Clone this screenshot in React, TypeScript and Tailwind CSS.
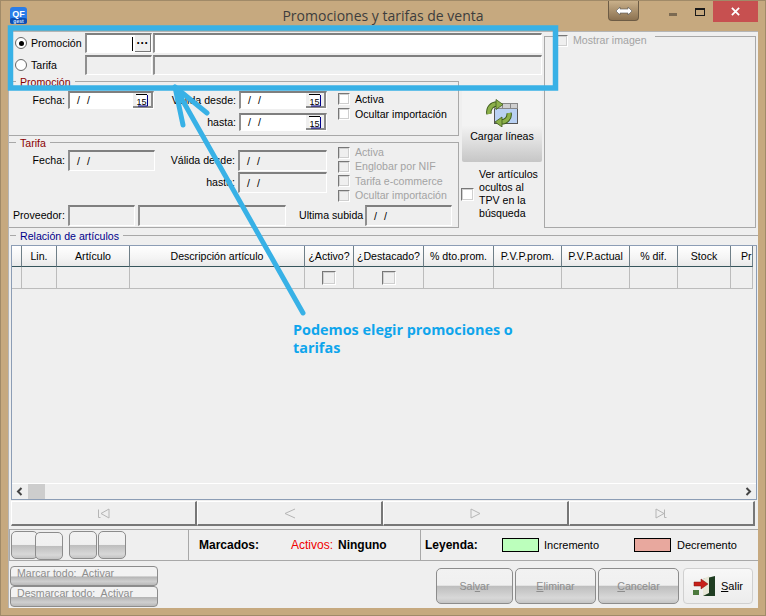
import React from "react";

const font = "font-['Liberation_Sans',Arial,sans-serif]";

function Sunken({ className = "", white = false, children }: { className?: string; white?: boolean; children?: React.ReactNode }) {
  return (
    <div className={`flex items-center border-t-2 border-l-2 border-t-[#7f7f7f] border-l-[#8f8f8f] border-b border-r border-b-white border-r-white ${white ? "bg-white" : "bg-[#efefef]"} ${className}`}>
      {children}
    </div>
  );
}

function CalendarIcon() {
  return (
    <div className="flex h-full w-[20px] items-center justify-center border-b-2 border-r-2 border-b-[#8a8a8a] border-r-[#8a8a8a] bg-[#efefef]">
      <svg width="14" height="14" viewBox="0 0 14 14">
        <rect x="1.5" y="1.5" width="10" height="11" fill="#fff" />
        <path d="M1 1.5h11" stroke="#000" />
        <path d="M12.5 2v11H3" stroke="#00008a" fill="none" />
        <text x="6.5" y="11.5" textAnchor="middle" fontSize="9" fill="#000" fontFamily="Liberation Sans">15</text>
      </svg>
    </div>
  );
}

function DateField({ w, button = false, white = false, h = "h-[18px]" }: { w: string; button?: boolean; white?: boolean; h?: string }) {
  return (
    <Sunken white={white} className={`${w} ${h} justify-between`}>
      <span className="ml-[7px] tracking-[2px] text-black">/ /</span>
      {button && <CalendarIcon />}
    </Sunken>
  );
}

function Check({ disabled = false, className = "" }: { disabled?: boolean; className?: string }) {
  return (
    <div className={`h-[12px] w-[12px] shrink-0 border-t border-l border-t-[#777] border-l-[#777] border-b border-r border-b-white border-r-white shadow-[inset_0_0_0_1px_#cfcfcf] ${disabled ? "bg-[#efefef]" : "bg-white"} ${className}`} />
  );
}

function CheckRow({ label, disabled = false, h }: { label: string; disabled?: boolean; h: string }) {
  return (
    <div className={`flex items-center gap-[5px] whitespace-nowrap ${h}`}>
      <Check disabled={disabled} />
      <span className={disabled ? "text-[#a3a3a3]" : "text-black"}>{label}</span>
    </div>
  );
}

function GroupLabel({ text, color }: { text: string; color: string }) {
  return <span className={`absolute left-[7px] top-[-6px] bg-[#efefef] px-[4px] ${color}`}>{text}</span>;
}

function Radio({ checked = false }: { checked?: boolean }) {
  return (
    <div className="flex h-[12px] w-[12px] items-center justify-center rounded-full border border-[#666] bg-white">
      {checked && <div className="h-[5px] w-[5px] rounded-full bg-black" />}
    </div>
  );
}

function GlossButton({ className = "", children }: { className?: string; children?: React.ReactNode }) {
  return (
    <div className={`rounded-[5px] border border-[#8c8c8c] bg-[linear-gradient(#f2f2f2_0%,#f0f0f0_48%,#bdbdbd_50%,#d8d8d8_85%,#c4c4c4_100%)] ${className}`}>
      {children}
    </div>
  );
}

function NavButton({ path }: { path: string }) {
  return (
    <div className="flex h-[25px] flex-1 items-center justify-center border-t border-l border-t-white border-l-white border-r-2 border-b-2 border-r-[#777] border-b-[#777]">
      <svg width="13" height="11" viewBox="0 0 13 11" fill="none" stroke="#b5b5b5">
        <path d={path} />
      </svg>
    </div>
  );
}

const columns = [
  { label: "", w: "w-[10px]" },
  { label: "Lin.", w: "w-[35px]" },
  { label: "Artículo", w: "w-[73px]" },
  { label: "Descripción artículo", w: "w-[175px]" },
  { label: "¿Activo?", w: "w-[49px]", check: true },
  { label: "¿Destacado?", w: "w-[70px]", check: true },
  { label: "% dto.prom.", w: "w-[70px]" },
  { label: "P.V.P.prom.", w: "w-[68px]" },
  { label: "P.V.P.actual", w: "w-[68px]" },
  { label: "% dif.", w: "w-[48px]" },
  { label: "Stock", w: "w-[53px]" },
  { label: "Pr", w: "w-[22px] !justify-start pl-[10px]" },
];

export default function App() {
  return (
    <div className={`relative flex h-[616px] w-[766px] flex-col overflow-hidden border border-[#a08a68] bg-[#c6a97f] text-[10.6px] leading-[13px] ${font}`}>
      <div className="relative flex h-[30px] shrink-0 items-center justify-center">
        <svg className="absolute left-[9px] top-[6px]" width="17" height="17" viewBox="0 0 17 17">
          <rect width="17" height="17" rx="3" fill="#2a7de8" />
          <rect y="11" width="17" height="6" rx="2" fill="#0d4fb4" />
          <text x="8.5" y="10" textAnchor="middle" fontSize="9" fontWeight="700" fill="#fff" fontFamily="Liberation Sans">QF</text>
          <text x="8.5" y="15.5" textAnchor="middle" fontSize="5" fontWeight="700" fill="#cfe2ff" fontFamily="Liberation Sans">gest</text>
        </svg>
        <span className="text-[14px] leading-[20px] text-[#3d3d3d] font-['Open_Sans',sans-serif]">Promociones y tarifas de venta</span>
        <div className="absolute left-[607px] top-0 flex h-[20px] w-[31px] items-center justify-center rounded-b-[4px] border border-t-0 border-[#6d5c45] bg-[linear-gradient(#c9b08a,#8c7251)]">
          <svg width="18" height="10" viewBox="0 0 18 10" fill="#fff" stroke="#555" strokeWidth="0.6">
            <path d="M1 5l4-4v2h8V1l4 4-4 4V7H5v2z" />
          </svg>
        </div>
        <div className="absolute left-[668px] top-[12px] h-[3px] w-[8px] bg-[#7b6a52]" />
        <div className="absolute left-[694px] top-[7px] h-[8px] w-[10px] border border-t-2 border-[#1a1a1a]" />
        <div className="absolute left-[712px] top-0 flex h-[21px] w-[45px] items-center justify-center bg-[#c75050] text-white">
          <svg width="9" height="9" viewBox="0 0 10 10" stroke="#fff" strokeWidth="2">
            <path d="M1 1l8 8M9 1l-8 8" />
          </svg>
        </div>
      </div>

      <div className="mx-[7px] flex h-[577px] w-[750px] shrink-0 flex-col border-t border-l border-t-[#b5b5b5] border-l-[#b5b5b5] bg-[#efefef]">
        <div className="flex h-[196px] shrink-0">
          <div className="w-[535px] shrink-0">
            <div className="flex h-[46px] flex-col gap-[2px] pt-[1px]">
              <div className="flex h-[20px] items-center">
                <div className="ml-[6px] w-[16px]"><Radio checked /></div>
                <span className="w-[54px] text-black">Promoción</span>
                <Sunken white className="h-[20px] w-[67px] justify-end">
                  <div className="mr-[2px] h-[14px] w-[1px] bg-black" />
                  <div className="flex h-full w-[16px] items-center justify-center border-r border-b border-r-[#777] border-b-[#777] bg-[#efefef] text-[12px] font-bold leading-none">···</div>
                </Sunken>
                <Sunken white className="ml-[1px] h-[20px] w-[389px]" />
              </div>
              <div className="flex h-[20px] items-center">
                <div className="ml-[6px] w-[16px]"><Radio /></div>
                <span className="w-[54px] text-black">Tarifa</span>
                <Sunken className="h-[20px] w-[67px]" />
                <Sunken className="ml-[1px] h-[20px] w-[389px]" />
              </div>
            </div>

            <div className="flex">
              <div className="flex w-[450px] shrink-0 flex-col">
                <div className="relative mt-[3px] flex h-[55px] border-t border-b border-r border-t-[#a8a8a8] border-b-[#a8a8a8] border-r-[#a8a8a8]">
                  <GroupLabel text="Promoción" color="text-[#8a0000]" />
                  <div className="mt-[9px] flex w-[145px] justify-end">
                    <div className="flex h-[18px] items-center gap-[3px]">
                      <span>Fecha:</span>
                      <DateField w="w-[86px]" button white />
                    </div>
                  </div>
                  <div className="mt-[9px] flex w-[173px] flex-col items-end gap-[4px]">
                    <div className="flex h-[18px] items-center gap-[3px]"><span>Válida desde:</span><DateField w="w-[88px]" button white /></div>
                    <div className="flex h-[18px] items-center gap-[3px]"><span>hasta:</span><DateField w="w-[88px]" button white /></div>
                  </div>
                  <div className="ml-[11px] mt-[11px] flex flex-col gap-[3px]">
                    <CheckRow label="Activa" h="h-[12px]" />
                    <CheckRow label="Ocultar importación" h="h-[12px]" />
                  </div>
                </div>

                <div className="relative mt-[6px] h-[86px] border border-l-0 border-[#a8a8a8]">
                  <GroupLabel text="Tarifa" color="text-[#8a0000]" />
                  <div className="flex">
                    <div className="mt-[7px] flex w-[146px] justify-end">
                      <div className="flex h-[21px] items-center gap-[3px]"><span>Fecha:</span><DateField w="w-[87px]" h="h-[21px]" /></div>
                    </div>
                    <div className="mt-[7px] flex w-[172px] flex-col items-end gap-[1px]">
                      <div className="flex h-[21px] items-center gap-[3px]"><span>Válida desde:</span><DateField w="w-[89px]" h="h-[21px]" /></div>
                      <div className="flex h-[21px] items-center gap-[3px]"><span>hasta:</span><DateField w="w-[89px]" h="h-[21px]" /></div>
                    </div>
                    <div className="ml-[11px] mt-[3px] flex flex-col">
                      <CheckRow label="Activa" disabled h="h-[13px]" />
                      <CheckRow label="Englobar por NIF" disabled h="h-[15px]" />
                      <CheckRow label="Tarifa e-commerce" disabled h="h-[14px]" />
                      <CheckRow label="Ocultar importación" disabled h="h-[15px]" />
                    </div>
                  </div>
                  <div className="mt-[2px] flex h-[21px] items-center whitespace-nowrap">
                    <span className="ml-[4px] w-[55px]">Proveedor:</span>
                    <Sunken className="h-[21px] w-[67px]" />
                    <Sunken className="ml-[3px] h-[21px] w-[148px]" />
                    <span className="ml-[13px] w-[66px]">Ultima subida</span>
                    <DateField w="w-[87px]" h="h-[21px]" />
                  </div>
                </div>
              </div>

              <div className="ml-[3px] flex flex-1 flex-col">
                <div className="mt-[11px] flex h-[73px] w-[80px] flex-col items-center rounded-[2px] bg-[linear-gradient(#f3f3f3_0%,#f3f3f3_50%,#c6c6c6_100%)] pt-[10px]">
                  <svg width="34" height="28" viewBox="0 0 34 28" fill="none">
                    <rect x="9.5" y="4.5" width="23" height="20" fill="#b9d1f3" stroke="#555" />
                    <rect x="9.5" y="4.5" width="23" height="5" fill="#cfcfcf" stroke="#888" />
                    <path d="M17.5 4v5M25.5 4v5" stroke="#888" />
                    <path d="M4 15C3 9 7 5 12 5" stroke="#3f5d1c" strokeWidth="5.5" />
                    <path d="M4 15C3 9 7 5 12 5" stroke="#8cb04a" strokeWidth="3.5" />
                    <path d="M11 0.5l7 5-7 5z" fill="#8cb04a" stroke="#3f5d1c" strokeWidth="0.8" />
                    <path d="M24 14C25 19 21 23 16 23" stroke="#3f5d1c" strokeWidth="5.5" />
                    <path d="M24 14C25 19 21 23 16 23" stroke="#8cb04a" strokeWidth="3.5" />
                    <path d="M17 18l-7 5 7 5z" fill="#8cb04a" stroke="#3f5d1c" strokeWidth="0.8" />
                  </svg>
                  <span className="mt-[3px] text-black">Cargar líneas</span>
                </div>
                <div className="mt-[6px] flex items-center">
                  <Check className="ml-[-1px] h-[13px] w-[13px]" />
                  <span className="ml-[5px] whitespace-nowrap">Ver artículos<br />ocultos al<br />TPV en la<br />búsqueda</span>
                </div>
              </div>
            </div>
          </div>

          <div className="relative mt-[4px] h-[192px] w-[212px] border border-[#a8a8a8]">
            <div className="absolute left-[11px] top-[-3px] flex items-center gap-[5px] bg-[#efefef] pr-[8px] text-[#a3a3a3]">
              <Check disabled />
              <span>Mostrar imagen</span>
            </div>
          </div>
        </div>

        <div className="relative mt-[7px] ml-[1px] flex h-[265px] w-[748px] shrink-0 flex-col border-t border-t-[#a8a8a8] px-[1px] pt-[9px]">
          <GroupLabel text="Relación de artículos" color="ml-[-1px] text-[#00008a]" />
          <div className="flex h-[255px] flex-col border border-[#8c9db5]">
            <div className="flex h-[21px] shrink-0 overflow-hidden">
              {columns.map((c, i) => (
                <div key={i} className={`flex shrink-0 items-center justify-center whitespace-nowrap border-r border-b border-r-[#6f7f88] border-b-[#36555c] bg-[linear-gradient(#ffffff,#f4f4f4_60%,#e8e8e8)] text-black ${c.w}`}>
                  {c.label}
                </div>
              ))}
            </div>
            <div className="flex h-[22px] shrink-0 overflow-hidden">
              {columns.map((c, i) => (
                <div key={i} className={`flex shrink-0 items-center justify-center border-r border-b border-r-[#bcbcbc] border-b-[#bcbcbc] ${i === 0 ? "border-r-[#36555c] border-b-[#36555c]" : ""} ${c.w}`}>
                  {c.check && <Check disabled className="h-[14px] w-[14px]" />}
                </div>
              ))}
            </div>
            <div className="flex-1" />
            <div className="flex h-[16px] shrink-0 items-center justify-between border-t border-t-white px-[4px]">
              <div className="flex items-center gap-[5px]">
                <svg width="7" height="9" viewBox="0 0 7 9" fill="none" stroke="#444" strokeWidth="2"><path d="M5.5 1L2 4.5 5.5 8" /></svg>
                <div className="h-[15px] w-[17px] bg-[#cdcdcd]" />
              </div>
              <svg width="7" height="9" viewBox="0 0 7 9" fill="none" stroke="#444" strokeWidth="2"><path d="M1.5 1L5 4.5 1.5 8" /></svg>
            </div>
          </div>
        </div>

        <div className="ml-[2px] mt-[1px] flex h-[25px] w-[744px] shrink-0">
          <NavButton path="M1.5 1.5v8h2M12 1L4 5.5 12 10z" />
          <NavButton path="M12 1L2 5.5 12 10" />
          <NavButton path="M2 1l9 4.5L2 10z" />
          <NavButton path="M1 1l8 4.5L1 10zM9.5 1.5v8h2" />
        </div>

        <div className="mt-[3px] flex h-[32px] w-[749px] shrink-0 border-t border-b border-l border-t-[#a8a8a8] border-b-[#a8a8a8] border-l-[#a8a8a8] text-[12px]">
          <div className="flex w-[179px] items-center border-r border-r-[#a8a8a8] pl-[1px]">
            <GlossButton className="h-[28px] w-[27px]" />
            <GlossButton className="ml-[-3px] mt-[1px] h-[28px] w-[28px]" />
            <GlossButton className="ml-[6px] h-[28px] w-[28px]" />
            <GlossButton className="ml-[1px] h-[28px] w-[28px]" />
          </div>
          <div className="flex w-[232px] items-center border-r border-r-[#a8a8a8]">
            <span className="ml-[10px] w-[92px] font-bold">Marcados:</span>
            <span className="w-[47px] text-[#f00000]">Activos:</span>
            <span className="font-bold">Ninguno</span>
          </div>
          <div className="flex flex-1 items-center">
            <span className="ml-[4px] w-[77px] font-bold">Leyenda:</span>
            <div className="h-[14px] w-[37px] border border-black bg-[#bcffbc]" />
            <span className="ml-[5px] w-[90px] text-[11px]">Incremento</span>
            <div className="h-[14px] w-[37px] border border-black bg-[#e8a89e]" />
            <span className="ml-[6px] text-[11px]">Decremento</span>
          </div>
        </div>

        <div className="flex flex-1 justify-between pl-[1px] pr-[5px] pt-[5px]">
          <div className="flex flex-col">
            <div className="h-[20px] w-[148px] rounded-[4px] border border-[#8c8c8c] bg-[linear-gradient(#f2f2f2_0%,#f2f2f2_50%,#b5b5b5_55%,#cfcfcf_80%,#b9b9b9_100%)] pl-[6px] text-[#8d8d8d]">Marcar todo:&nbsp; Activar</div>
            <div className="h-[21px] w-[148px] rounded-[4px] border border-[#8c8c8c] bg-[linear-gradient(#f2f2f2_0%,#f2f2f2_50%,#b5b5b5_55%,#cfcfcf_80%,#b9b9b9_100%)] pl-[6px] text-[#8d8d8d]">Desmarcar todo:&nbsp; Activar</div>
          </div>
          <div className="mt-[2px] flex h-[36px] gap-[2px]">
            <GlossButton className="flex w-[77px] items-center justify-center text-[#8d8d8d]"><span>Sal<u>v</u>ar</span></GlossButton>
            <GlossButton className="flex w-[81px] items-center justify-center text-[#8d8d8d]"><span><u>E</u>liminar</span></GlossButton>
            <GlossButton className="flex w-[81px] items-center justify-center text-[#8d8d8d]"><span><u>C</u>ancelar</span></GlossButton>
            <div className="ml-[2px] flex w-[70px] items-center justify-center gap-[5px] rounded-[4px] border border-[#d0d0d0] bg-[linear-gradient(#f8f8f8,#ececec)]">
              <svg width="23" height="22" viewBox="0 0 23 22">
                <path d="M10 4l12-3v20H10z" fill="#1f3d22" />
                <path d="M10 4l6-3v17l-6 3z" fill="#e8e8d8" />
                <rect x="0" y="15" width="6" height="5" fill="#4d7a3e" />
                <path d="M1 7h7V4l7 5-7 5v-3H1z" fill="#c8201a" stroke="#7c1510" strokeWidth="0.5" />
              </svg>
              <span className="text-[11px] text-black"><u>S</u>alir</span>
            </div>
          </div>
        </div>
      </div>

      {/* annotation drawn over the window */}
      <svg className="pointer-events-none absolute left-[-1px] top-[-1px]" width="766" height="616" viewBox="0 0 766 616" fill="none" stroke="#38b1e6">
        <rect x="10.5" y="28" width="545" height="60" strokeWidth="5.5" />
        <path d="M175 87l8 38M175 87l32 26M175 87l128 226" strokeWidth="5" strokeLinecap="round" />
      </svg>
      <div className="absolute left-[292px] top-[320px] w-[240px] text-[14.4px] font-bold leading-[18px] text-[#0ea5ec] font-['Open_Sans',sans-serif]">
        Podemos elegir promociones o tarifas
      </div>
    </div>
  );
}
